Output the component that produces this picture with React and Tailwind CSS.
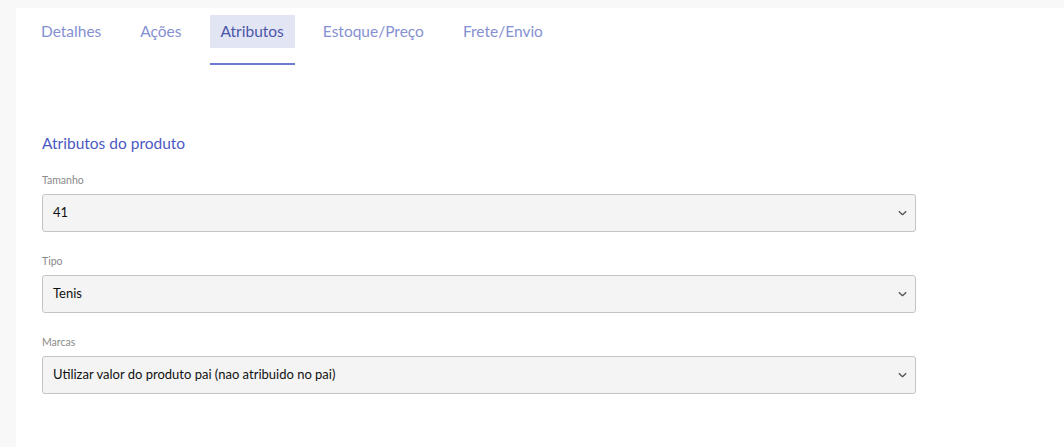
import React from "react";

const tabs = ["Detalhes", "Ações", "Atributos", "Estoque/Preço", "Frete/Envio"];

const fields = [
  { label: "Tamanho", value: "41" },
  { label: "Tipo", value: "Tenis" },
  { label: "Marcas", value: "Utilizar valor do produto pai (nao atribuido no pai)" },
];

const Chevron = () => (
  <svg width="9" height="5" viewBox="0 0 9 5" fill="none" className="absolute right-[8px] top-1/2 -translate-y-1/2">
    <path d="M0.8 0.8l3.7 3.5 3.7-3.5" stroke="#555" strokeWidth="1.3" />
  </svg>
);

const App = () => {
  const [active, setActive] = React.useState("Atributos");

  return (
    <div className="w-[1064px] h-[447px] bg-[#f8f8f8] pl-[16px] pt-[8px] font-['Lato','Noto_Sans',sans-serif] overflow-hidden">
      <div className="bg-white h-full">
        <div className="flex gap-[17px] pl-[14px] pt-[7px]">
          {tabs.map((t) => (
            <button
              key={t}
              onClick={() => setActive(t)}
              className="flex flex-col items-stretch"
            >
              <span
                className={`h-[33px] px-[11px] flex items-center text-[15.5px] ${
                  active === t ? "bg-[#e2e5f4] text-[#4a55a8]" : "text-[#8590d2]"
                }`}
              >
                {t}
              </span>
              <span
                className={`mt-[15px] h-[2px] ${active === t ? "bg-[#6e7bd0]" : "bg-transparent"}`}
              />
            </button>
          ))}
        </div>

        <div className="pl-[26px] pt-[68px] w-[900px]">
          <p className="text-[15.5px] text-[#4b59c2] leading-[20px]">Atributos do produto</p>

          <div className="mt-[20px] flex flex-col gap-[22px]">
            {fields.map((f) => (
              <div key={f.label}>
                <label className="block text-[10.5px] text-[#8a8a8a] leading-[14px] mb-[7px]">{f.label}</label>
                <div className="relative h-[38px] bg-[#f4f4f4] border border-[#c4c4c4] rounded-[3px] flex items-center pl-[10px]">
                  <span className="text-[13px] text-[#111]">{f.value}</span>
                  <Chevron />
                </div>
              </div>
            ))}
          </div>
        </div>
      </div>
    </div>
  );
};

export default App;
